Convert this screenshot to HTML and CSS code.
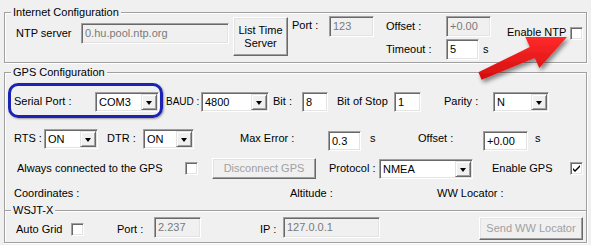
FILE: index.html
```html
<!DOCTYPE html>
<html lang="en">
<head>
    <meta charset="UTF-8">
    <meta name="viewport" content="width=device-width, initial-scale=1.0">
    <title>GPS / NTP Settings</title>

    <link rel="stylesheet" href="styles.css">
</head>
<body>

    <!-- Internet Configuration -->
    <div class="group net-group">
        <span class="group-title">Internet Configuration</span>
        <div class="net-row">
            <span class="lbl ntp-lbl">NTP server</span>
            <div class="field readonly ntp-host">0.hu.pool.ntp.org</div>
            <button class="btn list-btn">List Time<br>Server</button>
            <span class="lbl port-lbl">Port :</span>
            <div class="field readonly port-in">123</div>
            <div class="offset-col">
                <div class="sub-row">
                    <span class="lbl off-lbl">Offset :</span>
                    <div class="field readonly off-in">+0.00</div>
                </div>
                <div class="sub-row second">
                    <span class="lbl off-lbl">Timeout :</span>
                    <div class="field timeout-in">5</div>
                    <span class="lbl unit">s</span>
                </div>
            </div>
            <span class="lbl ntp-enable">Enable NTP</span>
            <span class="check ntp-check"></span>
        </div>
    </div>

    <!-- GPS Configuration -->
    <div class="group gps-group">
        <span class="group-title">GPS Configuration</span>

        <div class="row gps-row1">
            <span class="lbl serial-lbl">Serial Port :</span>
            <div class="combo com-combo"><span>COM3</span><i class="drop"></i></div>
            <span class="lbl baud-lbl">BAUD :</span>
            <div class="combo baud-combo"><span>4800</span><i class="drop"></i></div>
            <span class="lbl bit-lbl">Bit :</span>
            <div class="field small bit-in">8</div>
            <span class="lbl stop-lbl">Bit of Stop</span>
            <div class="field small stop-in">1</div>
            <span class="lbl parity-lbl">Parity :</span>
            <div class="combo parity-combo"><span>N</span><i class="drop"></i></div>
        </div>

        <div class="row gps-row2">
            <span class="lbl rts-lbl">RTS :</span>
            <div class="combo rts-combo"><span>ON</span><i class="drop"></i></div>
            <span class="lbl dtr-lbl">DTR :</span>
            <div class="combo dtr-combo"><span>ON</span><i class="drop"></i></div>
            <span class="lbl maxerr-lbl">Max Error :</span>
            <div class="field small low maxerr-in">0.3</div>
            <span class="lbl unit-wide">s</span>
            <span class="lbl gps-off-lbl">Offset :</span>
            <div class="field small low gps-off-in">+0.00</div>
            <span class="lbl unit-end">s</span>
        </div>

        <div class="row gps-row3">
            <span class="lbl always-lbl">Always connected to the GPS</span>
            <span class="check"></span>
            <button class="btn disabled disc-btn">Disconnect GPS</button>
            <span class="lbl proto-lbl">Protocol :</span>
            <div class="combo nmea-combo"><span>NMEA</span><i class="drop"></i></div>
            <span class="lbl gps-enable">Enable GPS</span>
            <span class="check checked">
                <svg width="11" height="11" viewBox="0 0 11 11"><path d="M2 5 L4 7 L9 2 L9 4 L4 9 L2 7 Z" fill="#000"/></svg>
            </span>
        </div>

        <div class="row gps-row4">
            <span class="lbl coord-lbl">Coordinates :</span>
            <span class="lbl alt-lbl">Altitude :</span>
            <span class="lbl">WW Locator :</span>
        </div>
    </div>

    <!-- WSJT-X -->
    <div class="group wsjt-group">
        <span class="group-title">WSJT-X</span>
        <div class="row wsjt-row">
            <span class="lbl auto-lbl">Auto Grid</span>
            <span class="check"></span>
            <span class="lbl wport-lbl">Port :</span>
            <div class="field readonly wport-in">2.237</div>
            <span class="lbl ip-lbl">IP :</span>
            <div class="field readonly ip-in">127.0.0.1</div>
            <button class="btn disabled send-btn">Send WW Locator</button>
        </div>
    </div>

    <!-- annotations drawn over the form -->
    <div class="highlight"></div>
    <svg class="arrow" width="591" height="245" viewBox="0 0 591 245">
        <defs>
            <filter id="shade" x="-20%" y="-20%" width="140%" height="160%">
                <feDropShadow dx="2" dy="3" stdDeviation="2" flood-color="#000" flood-opacity="0.45"/>
            </filter>
            <linearGradient id="red" x1="0" y1="0" x2="0" y2="1">
                <stop offset="0" stop-color="#ff2a2a"/>
                <stop offset="1" stop-color="#d40d0d"/>
            </linearGradient>
        </defs>
        <path d="M478.4 72.3 L529.8 47 L525.3 37 L567 37 L539.3 68 L534.8 58 L481.6 79.7 Z" fill="url(#red)" filter="url(#shade)"/>
    </svg>

</body>
</html>
```

FILE: styles.css
```css
body {
    margin: 0;
    width: 591px;
    height: 245px;
    overflow: hidden;
    position: relative;
    background: #f0f0f0;
    font-family: "Liberation Sans", Arial, sans-serif;
    font-size: 11px;
    color: #000;
}

/* group boxes */
.group {
    position: relative;
    margin: 0 4px;
    border: 1px solid #a0a0a0;
    box-shadow: inset 1px 1px 0 #fff, 1px 1px 0 #fff;
}

.group-title {
    position: absolute;
    top: -7px;
    left: 6px;
    padding: 0 2px;
    line-height: 13px;
    background: #f0f0f0;
}

.net-group {
    margin-top: 12px;
    height: 49px;
}

.gps-group {
    margin-top: 9px;
    height: 137px;
    border-bottom: none;
}

.wsjt-group {
    height: 31px;
}

.lbl {
    line-height: 13px;
    white-space: nowrap;
}

.row {
    display: flex;
    align-items: center;
    padding-left: 9px;
}

/* controls */
.field {
    box-sizing: border-box;
    height: 21px;
    padding: 2px 3px 0;
    line-height: 15px;
    background: #fff;
    border: 1px solid;
    border-color: #a0a0a0 #fff #fff #a0a0a0;
    box-shadow: inset 1px 1px 0 #696969, inset -1px -1px 0 #e3e3e3;
    white-space: nowrap;
}

.field.small {
    height: 20px;
}

.field.low {
    margin-top: 4px;
}

.field.readonly {
    background: #f0f0f0;
    color: #7a7a7a;
}

.combo {
    box-sizing: border-box;
    position: relative;
    height: 20px;
    padding: 2px 3px 0;
    line-height: 14px;
    background: #fff;
    border: 1px solid;
    border-color: #a0a0a0 #fff #fff #a0a0a0;
    box-shadow: inset 1px 1px 0 #696969, inset -1px -1px 0 #e3e3e3;
}

.combo .drop {
    position: absolute;
    top: 1px;
    right: 1px;
    bottom: 1px;
    width: 16px;
    box-sizing: border-box;
    background: #f0f0f0;
    border: 1px solid;
    border-color: #e3e3e3 #696969 #696969 #e3e3e3;
    box-shadow: inset 1px 1px 0 #fff, inset -1px -1px 0 #a0a0a0;
}

.combo .drop::after {
    content: "";
    position: absolute;
    left: 4px;
    top: 6px;
    border-left: 3.5px solid transparent;
    border-right: 3.5px solid transparent;
    border-top: 4px solid #000;
}

.btn {
    box-sizing: border-box;
    margin: 0;
    padding: 0;
    font: inherit;
    line-height: 13px;
    color: #000;
    background: #f0f0f0;
    border: 1px solid;
    border-color: #fff #696969 #696969 #fff;
    box-shadow: inset -1px -1px 0 #a0a0a0, inset 1px 1px 0 #e3e3e3;
}

.btn.disabled {
    color: #a0a0a0;
}

.check {
    box-sizing: border-box;
    display: inline-block;
    width: 13px;
    height: 13px;
    background: #fff;
    border: 1px solid;
    border-color: #a0a0a0 #fff #fff #a0a0a0;
    box-shadow: inset 1px 1px 0 #696969, inset -1px -1px 0 #e3e3e3;
    flex-shrink: 0;
}

.check.checked svg {
    display: block;
    margin: 0;
}

/* internet row */
.net-row {
    display: flex;
    align-items: flex-start;
    padding-left: 11px;
}

.ntp-lbl { width: 65px; margin-top: 14px; }
.ntp-host { width: 148px; margin-top: 10px; }
.list-btn { width: 55px; height: 39px; margin: 4px 0 0 4px; }
.port-lbl { width: 37px; margin: 6px 0 0 4px; }
.port-in { width: 45px; margin-top: 3px; }

.offset-col {
    margin: 3px 0 0 12px;
}

.sub-row {
    display: flex;
    align-items: center;
}

.sub-row.second {
    margin-top: 2px;
}

.off-lbl { width: 60px; }
.off-in { width: 45px; }
.timeout-in { width: 33px; }
.unit { margin-left: 4px; }

.ntp-enable { width: 63px; margin: 13px 0 0 16px; }
.ntp-check { margin-top: 14px; }

/* gps rows */
.gps-row1 { margin-top: 18px; height: 21px; }
.serial-lbl { width: 81px; }
.com-combo { width: 64px; }
.baud-lbl { width: 35px; margin-left: 7px; font-size: 10px; }
.baud-combo { width: 68px; }
.bit-lbl { width: 29px; margin-left: 4px; }
.bit-in { width: 26px; }
.stop-lbl { width: 57px; margin-left: 9px; }
.stop-in { width: 27px; }
.parity-lbl { width: 49px; margin-left: 23px; }
.parity-combo { width: 56px; }

.gps-row2 { margin-top: 16px; height: 21px; }
.rts-lbl { width: 30px; }
.rts-combo { width: 54px; }
.dtr-lbl { width: 36px; margin-left: 9px; }
.dtr-combo { width: 51px; }
.maxerr-lbl { width: 88px; margin-left: 46px; }
.maxerr-in { width: 33px; }
.unit-wide { width: 48px; margin-left: 9px; }
.gps-off-lbl { width: 65px; }
.gps-off-in { width: 45px; }
.unit-end { margin-left: 7px; }

.gps-row3 { margin-top: 9px; height: 21px; }
.always-lbl { width: 168px; margin-left: 3px; }
.disc-btn { width: 104px; height: 21px; margin-left: 14px; }
.proto-lbl { width: 50px; margin-left: 13px; }
.nmea-combo { width: 94px; }
.gps-enable { width: 78px; margin-left: 19px; }

.gps-row4 { margin-top: 8px; height: 13px; }
.coord-lbl { width: 276px; }
.alt-lbl { width: 147px; }

/* wsjt row */
.wsjt-row {
    padding: 5px 0 0 11px;
    height: 23px;
}

.auto-lbl { width: 55px; margin-top: 4px; }
.wsjt-row .check { margin-top: 3px; }
.wport-lbl { width: 37px; margin: 4px 0 0 33px; }
.wport-in { width: 47px; }
.ip-lbl { width: 23px; margin: 4px 0 0 59px; }
.ip-in { width: 97px; }
.send-btn { width: 104px; height: 23px; margin: 2px 0 0 99px; }

/* annotations */
.highlight {
    position: absolute;
    left: 8px;
    top: 83px;
    width: 155px;
    height: 35px;
    box-sizing: border-box;
    border: 3px solid #1c22b4;
    border-radius: 10px;
    box-shadow: 1px 1px 2px rgba(0, 0, 0, 0.35);
}

.arrow {
    position: absolute;
    left: 0;
    top: 0;
    pointer-events: none;
}
```
